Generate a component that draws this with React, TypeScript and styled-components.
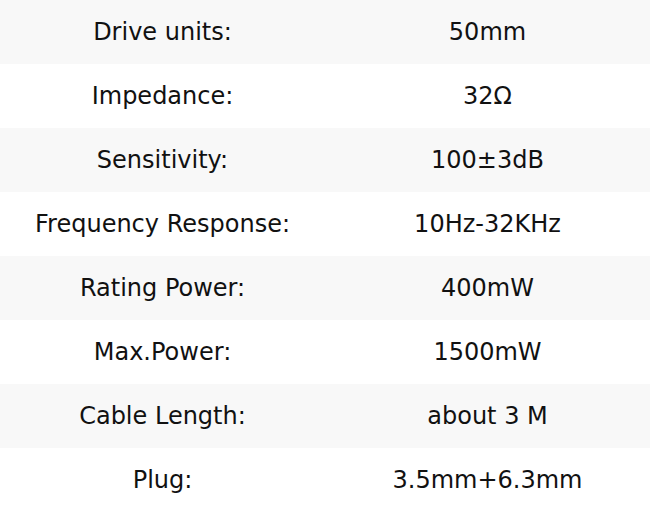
import React from "react";
import styled, { createGlobalStyle } from "styled-components";

const Global = createGlobalStyle`
  html, body { margin: 0; padding: 0; background: #ffffff; }
  body { font-family: "DejaVu Sans", sans-serif; }
`;

const Table = styled.div`
  width: 650px;
  display: flex;
  flex-direction: column;
`;

const Row = styled.div<{ $shaded: boolean }>`
  height: 64px;
  display: grid;
  grid-template-columns: 325px 325px;
  align-items: center;
  background: ${(p) => (p.$shaded ? "#f8f8f8" : "#ffffff")};
`;

const Cell = styled.div`
  text-align: center;
  font-size: 24px;
  line-height: 1;
  color: #111111;
  white-space: nowrap;
`;

const specs: [string, string][] = [
  ["Drive units:", "50mm"],
  ["Impedance:", "32Ω"],
  ["Sensitivity:", "100±3dB"],
  ["Frequency Response:", "10Hz-32KHz"],
  ["Rating Power:", "400mW"],
  ["Max.Power:", "1500mW"],
  ["Cable Length:", "about 3 M"],
  ["Plug:", "3.5mm+6.3mm"],
];

export default function App() {
  return (
    <>
      <Global />
      <Table>
        {specs.map(([k, v], i) => (
          <Row key={k} $shaded={i % 2 === 0}>
            <Cell>{k}</Cell>
            <Cell>{v}</Cell>
          </Row>
        ))}
      </Table>
    </>
  );
}
